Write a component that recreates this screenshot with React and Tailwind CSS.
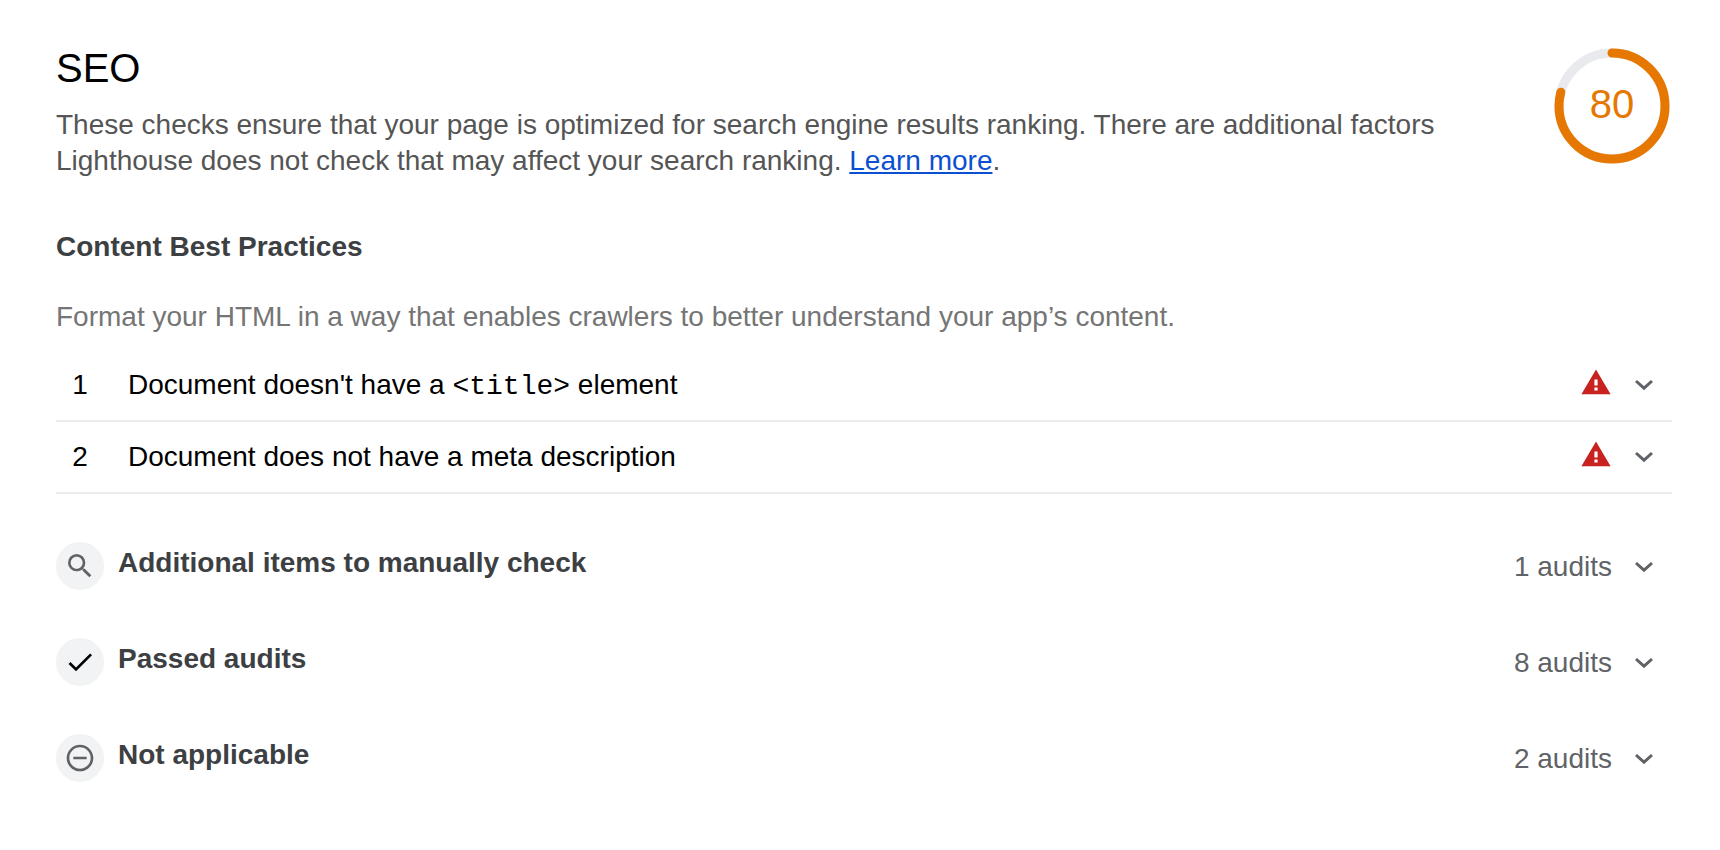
import React from "react";

const RADIUS = 53;
const CIRCUMFERENCE = 2 * Math.PI * RADIUS;

const audits = [
  {
    id: "document-title",
    title: (
      <>
        Document doesn't have a{" "}
        <code className="font-['Liberation_Mono',monospace] text-[28px] leading-none">&lt;title&gt;</code> element
      </>
    ),
  },
  { id: "meta-description", title: "Document does not have a meta description" },
];

const groups = [
  {
    title: "Additional items to manually check",
    count: 1,
    color: "text-[#5f6368]",
    path: "M15.5 14h-.79l-.28-.27A6.471 6.471 0 0 0 16 9.5 6.5 6.5 0 1 0 9.5 16c1.61 0 3.09-.59 4.23-1.57l.27.28v.79l5 4.99L20.49 19l-4.99-5zm-6 0C7.01 14 5 11.99 5 9.5S7.01 5 9.5 5 14 7.01 14 9.5 11.99 14 9.5 14z",
  },
  {
    title: "Passed audits",
    count: 8,
    color: "text-black",
    path: "M9 16.17L4.83 12l-1.42 1.41L9 19 21 7l-1.41-1.41z",
  },
  {
    title: "Not applicable",
    count: 2,
    color: "text-[#5f6368]",
    path: "M7 11v2h10v-2H7zm5-9C6.48 2 2 6.48 2 12s4.48 10 10 10 10-4.48 10-10S17.52 2 12 2zm0 18c-4.41 0-8-3.59-8-8s3.59-8 8-8 8 3.59 8 8-3.59 8-8 8z",
  },
];

function Chevron() {
  return (
    <svg viewBox="0 0 24 24" className="size-6 shrink-0" fill="none" stroke="#5f6368" strokeWidth="3" aria-hidden="true">
      <path d="M4 8l8 7.2L20 8" />
    </svg>
  );
}

function Gauge({ score }) {
  const arc = (score / 100) * CIRCUMFERENCE - 3;
  return (
    <div className="grid size-[120px] shrink-0 place-items-center">
      <svg viewBox="0 0 120 120" className="col-start-1 row-start-1 size-full" fill="none" strokeWidth="9" aria-hidden="true">
        <circle cx="60" cy="60" r={RADIUS} stroke="#e8eaed" />
        <circle
          cx="60"
          cy="60"
          r={RADIUS}
          stroke="#e67700"
          strokeLinecap="round"
          strokeDasharray={`${arc} ${CIRCUMFERENCE}`}
          transform="rotate(-90 60 60)"
        />
      </svg>
      <span className="col-start-1 row-start-1 pb-1 text-[40px] leading-10 text-[#e67700]">{score}</span>
    </div>
  );
}

function AuditRow({ index, title }) {
  return (
    <li className="border-b-2 border-[#ebebeb]">
      <button type="button" className="flex w-full items-center py-[17px] pr-4 text-left text-black">
        <span className="w-12 text-center">{index}</span>
        <span className="ml-6 grow">{title}</span>
        <svg viewBox="0 0 30 26" className="mr-[21px] mb-1.5 h-[26px] w-[30px] shrink-0" aria-label="Fail" role="img">
          <path d="M15 0.5L29.6 25.3H0.4z" fill="#c7221f" />
          <path d="M13.4 10.4h3.2v6h-3.2zM13.4 18.6h3.2v2.8h-3.2z" fill="#fff" />
        </svg>
        <Chevron />
      </button>
    </li>
  );
}

function GroupRow({ title, count, color, path }) {
  return (
    <button type="button" className="flex w-full items-center pr-4 text-left">
      <span className={`grid size-12 shrink-0 place-items-center rounded-full bg-[#f1f3f4] ${color}`}>
        <svg viewBox="0 0 24 24" className="size-8" fill="currentColor" aria-hidden="true">
          <path d={path} />
        </svg>
      </span>
      <span className="ml-[14px] grow pb-1.5 font-bold text-[#3c4043]">{title}</span>
      <span className="flex items-center gap-5 pt-0.5 text-[#5f6368]">
        {count} audits
        <Chevron />
      </span>
    </button>
  );
}

export default function App() {
  return (
    <main className="min-h-screen bg-white pt-[46px] pr-12 pb-16 pl-14 font-['Liberation_Sans',Arial,sans-serif] text-[28px] leading-9">
      <header className="flex items-start justify-between gap-20">
        <div>
          <h1 className="text-[40px] leading-[44px] text-black">SEO</h1>
          <p className="mt-[17px] text-[#555]">
            These checks ensure that your page is optimized for search engine results ranking. There are additional factors
            Lighthouse does not check that may affect your search ranking.{" "}
            <a href="#learn-more" className="text-[#0b50d0] underline">
              Learn more
            </a>
            .
          </p>
        </div>
        <Gauge score={80} />
      </header>
      <section className="mt-[50px]">
        <h2 className="font-bold text-[#3c4043]">Content Best Practices</h2>
        <p className="mt-[34px] text-[#757575]">
          Format your HTML in a way that enables crawlers to better understand your app’s content.
        </p>
        <ol className="mt-[15px]">
          {audits.map((audit, i) => (
            <AuditRow key={audit.id} index={i + 1} title={audit.title} />
          ))}
        </ol>
      </section>
      <section className="mt-12 flex flex-col gap-12">
        {groups.map((group) => (
          <GroupRow key={group.title} {...group} />
        ))}
      </section>
    </main>
  );
}
